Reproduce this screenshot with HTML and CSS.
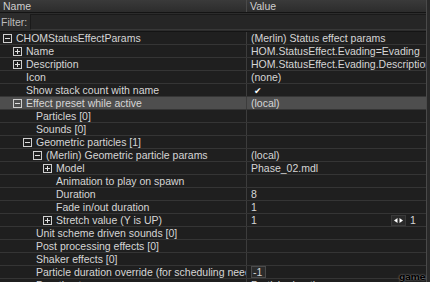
FILE: index.html
```html
<!DOCTYPE html>
<html lang="en">
<head>
  <meta charset="UTF-8">
  <title>Property grid</title>
  <link rel="stylesheet" href="styles.css">
</head>
<body>
<div class="grid">
  <div class="head">
    <div class="hname">Name</div>
    <div class="hvalue">Value</div>
  </div>
  <div class="filter">
    <span>Filter:</span>
    <div class="filter-box"></div>
  </div>

  <div class="row"><div class="name l0"><span class="exp minus"></span>CHOMStatusEffectParams</div><div class="value">(Merlin) Status effect params</div></div>
  <div class="row"><div class="name l1"><span class="exp plus"></span>Name</div><div class="value">HOM.StatusEffect.Evading=Evading</div></div>
  <div class="row"><div class="name l1"><span class="exp plus"></span>Description</div><div class="value">HOM.StatusEffect.Evading.Description</div></div>
  <div class="row"><div class="name l1"><span class="noexp"></span>Icon</div><div class="value">(none)</div></div>
  <div class="row"><div class="name l1"><span class="noexp"></span>Show stack count with name</div><div class="value"><span class="check">&#10004;</span></div></div>
  <div class="row sel"><div class="name l1"><span class="exp minus"></span>Effect preset while active</div><div class="value">(local)</div></div>
  <div class="row"><div class="name l2"><span class="noexp"></span>Particles [0]</div><div class="value"></div></div>
  <div class="row"><div class="name l2"><span class="noexp"></span>Sounds [0]</div><div class="value"></div></div>
  <div class="row"><div class="name l2"><span class="exp minus"></span>Geometric particles [1]</div><div class="value"></div></div>
  <div class="row"><div class="name l3"><span class="exp minus"></span>(Merlin) Geometric particle params</div><div class="value">(local)</div></div>
  <div class="row"><div class="name l4"><span class="exp plus"></span>Model</div><div class="value">Phase_02.mdl</div></div>
  <div class="row"><div class="name l4"><span class="noexp"></span>Animation to play on spawn</div><div class="value"></div></div>
  <div class="row"><div class="name l4"><span class="noexp"></span>Duration</div><div class="value">8</div></div>
  <div class="row"><div class="name l4"><span class="noexp"></span>Fade in/out duration</div><div class="value">1</div></div>
  <div class="row"><div class="name l4"><span class="exp plus"></span>Stretch value (Y is UP)</div><div class="value spin"><span class="spin-val">1</span><span class="spin-btn"><svg width="9" height="5" viewBox="0 0 9 5"><path d="M0 2.5L3.5 0V5Z M9 2.5L5.5 0V5Z" fill="#fff"/></svg></span><span class="spin-num">1</span></div></div>
  <div class="row"><div class="name l2"><span class="noexp"></span>Unit scheme driven sounds [0]</div><div class="value"></div></div>
  <div class="row"><div class="name l2"><span class="noexp"></span>Post processing effects [0]</div><div class="value"></div></div>
  <div class="row"><div class="name l2"><span class="noexp"></span>Shaker effects [0]</div><div class="value"></div></div>
  <div class="row"><div class="name l2"><span class="noexp"></span>Particle duration override (for scheduling needs)</div><div class="value"><span class="edit">-1</span></div></div>
  <div class="row"><div class="name l2"><span class="noexp"></span>Duration type</div><div class="value">Particle duration</div></div>
</div>
<div class="mark">game</div>
</body>
</html>
```

FILE: styles.css
```css
html, body {
  margin: 0;
  height: 100%;
  overflow: hidden;
}
body {
  background: #2a2a2a;
  font-family: "Liberation Sans", Arial, sans-serif;
  font-size: 10.5px;
  color: #d6d6d6;
  position: relative;
}
.grid {
  width: 426px;
  border-right: 1px solid #4a4a4a;
  background: #1f1f1f;
}
.head {
  display: grid;
  grid-template-columns: 246px 1fr;
  height: 12px;
  line-height: 12px;
  background: linear-gradient(#3a3a3a, #2c2c2c);
  border-bottom: 1px solid #141414;
  color: #cfcfcf;
}
.hname { padding-left: 3px; }
.hvalue {
  border-left: 1px solid #4a4a4a;
  padding-left: 3px;
}
.filter {
  display: flex;
  align-items: center;
  gap: 3px;
  height: 18px;
  padding-left: 1px;
  background: #2c2c2c;
  border-bottom: 1px solid #141414;
  color: #bdbdbd;
}
.filter-box {
  flex: 1;
  height: 14px;
  background: #262626;
  border-top: 1px solid #1a1a1a;
  border-left: 1px solid #1a1a1a;
  border-bottom: 1px solid #383838;
}
.row {
  display: grid;
  grid-template-columns: 246px 1fr;
  height: 12px;
  line-height: 12px;
  border-bottom: 1px solid #353535;
  background: #1f1f1f;
  white-space: nowrap;
}
.row.sel { background: #4e4e4e; }
.name {
  display: flex;
  align-items: center;
  overflow: hidden;
}
.l0 { padding-left: 3px; }
.l1 { padding-left: 13px; }
.l2 { padding-left: 23px; }
.l3 { padding-left: 33px; }
.l4 { padding-left: 43px; }
.value {
  border-left: 1px solid #3c3c3c;
  padding-left: 4px;
  overflow: hidden;
}
.exp, .noexp {
  flex: none;
  width: 7px;
  height: 7px;
  margin-right: 4px;
}
.exp {
  border: 1px solid #cfcfcf;
  position: relative;
}
.exp::before {
  content: "";
  position: absolute;
  left: 1px;
  top: 3px;
  width: 5px;
  height: 1px;
  background: #e0e0e0;
}
.exp.plus::after {
  content: "";
  position: absolute;
  left: 3px;
  top: 1px;
  width: 1px;
  height: 5px;
  background: #e0e0e0;
}
.noexp { border: 1px solid transparent; }
.check {
  color: #fff;
  font-family: "DejaVu Sans", sans-serif;
  font-size: 9px;
  padding-left: 3px;
}
.spin {
  display: flex;
  align-items: center;
}
.spin-val { flex: 1; }
.spin-btn {
  display: flex;
  align-items: center;
  height: 9px;
  padding: 0 2px;
  background: #2a2a2a;
  border: 1px solid #3a3a3a;
  margin-right: 4px;
}
.spin-num { width: 16px; }
.edit {
  display: inline-block;
  background: #2b2b2b;
  border: 1px solid #4a4a4a;
  height: 10px;
  line-height: 10px;
  padding: 0 3px 0 1px;
}
.mark {
  position: absolute;
  right: 5px;
  top: 272px;
  font-family: "DejaVu Sans", sans-serif;
  font-size: 9px;
  font-weight: bold;
  letter-spacing: -0.5px;
  color: #000;
  text-shadow: 0 0 2px #aaa;
}
```
